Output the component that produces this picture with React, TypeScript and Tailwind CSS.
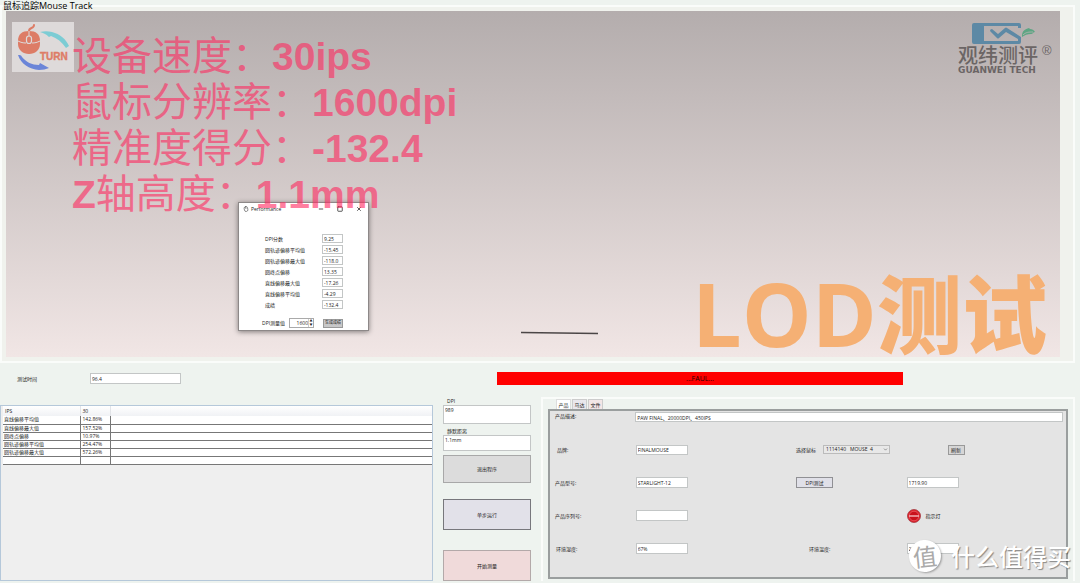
import React from 'react';
import { ChevronDown, Minus, Mouse, Square, X } from 'lucide-react';

const inputStyle =
  'block bg-white border border-[#c3c6c6] text-[5px] leading-[6px] text-[#222] px-px rounded-none outline-none';

const scores = [
  { id: 'dpi-score', label: 'DPI分数', value: '9.25' },
  { id: 'circle-avg', label: '圆轨迹偏移平均值', value: '-15.45' },
  { id: 'circle-max', label: '圆轨迹偏移最大值', value: '-118.0' },
  { id: 'circle-end', label: '圆终点偏移', value: '13.35' },
  { id: 'line-max', label: '直线偏移最大值', value: '-17.26' },
  { id: 'line-avg', label: '直线偏移平均值', value: '-4.29' },
  { id: 'result', label: '成绩', value: '-132.4' },
];

const results = [
  ['直线偏移平均值', '142.86%'],
  ['直线偏移最大值', '157.52%'],
  ['圆终点偏移', '10.97%'],
  ['圆轨迹偏移平均值', '254.47%'],
  ['圆轨迹偏移最大值', '572.26%'],
  ['', ''],
];

const TurnLogo = () => (
  <svg viewBox="0 0 62 50" className="w-[62px] h-[50px]" role="img" aria-label="Turn">
    <rect width="62" height="50" fill="#dedada" />
    <path d="M17 9c0-4 5-2 5-6" fill="none" stroke="#dd7c66" strokeWidth="2" strokeLinecap="round" />
    <path d="M6 19c0-7 4-10 11-10s11 3 11 10v3c0 6-5 10-11 10S6 28 6 22z" fill="#dd7c66" />
    <path d="M6 19c3 1.500 5 2 8 2M20 21c3 0 5-0.500 8-2M17 9v5" fill="none" stroke="#dedada" strokeWidth="1" />
    <rect x="14.500" y="14" width="5" height="7.500" rx="2.500" fill="#dd7c66" stroke="#dedada" strokeWidth="1.200" />
    <path d="M28 10c4-1 8-1 12 0 8 2 14 7 17 14l-3 2c-4-6-9-10-15-12l-2 1c-3-3-6-4-9-5z" fill="#7cccd4" />
    <path d="M6 33c2 0 3 0 4 2 4 5 10 8 17 8l1-2 9 5c-3 1-6 2-10 2C17 47 9 42 6 33z" fill="#6b85d8" />
    <text x="28" y="38" fontSize="10" className="font-['Liberation_Sans',sans-serif] font-bold" fill="#dd7c66" stroke="#dd7c66" strokeWidth="0.400">
      TURN
    </text>
  </svg>
);

const GuanweiLogo = () => (
  <svg viewBox="0 0 96 54" className="w-[96px] h-[54px]" role="img" aria-label="观纬测评">
    <path
      d="M16 1h45q2 0 2 2v3h-3V4H26v15h34v-2l-12-7-7 6q-1 1-2 0l-7-7q0-2 2-2l6 5 7-6q1-1 2 0l14 9v5q0 2-2 2H16q-2 0-2-2V3q0-2 2-2z"
      fill="#5d89a5"
    />
    <path d="M64 14c0-5 3-7 7-8l1 1c2 0 4 1 5 3-2 0-2 2-4 2-4 0-6 1-9 3z" fill="#5da583" />
    <path d="M65 13c3-3 6-3 10-3" fill="none" stroke="#bbb4b4" strokeWidth="0.800" />
    <text x="0" y="41" fontSize="20" className="font-['Noto_Sans_CJK_SC',sans-serif] font-medium" fill="#6b6565">
      观纬测评
    </text>
    <text x="0" y="51" fontSize="9" className="font-['DejaVu_Sans',sans-serif] font-bold" fill="#6b6565">
      GUANWEI TECH
    </text>
    <text x="84" y="33" fontSize="13" className="font-['Liberation_Sans',sans-serif]" fill="#6b6565">
      ®
    </text>
  </svg>
);

const Performance = () => (
  <section className="absolute left-[232px] top-[191px] w-[131px] h-[129px] bg-white border border-[#8d8888] shadow-[0_1px_5px_rgba(0,0,0,0.45)] text-[5px] leading-[6px]">
    <header className="flex items-center h-[11px] pl-1 pr-[6px]">
      <Mouse className="w-[6px] h-[6px] -rotate-12" />
      <h2 className="ml-[2px] flex-1 text-[5px]">Performance</h2>
      <div className="flex gap-[13px]">
        <button aria-label="Minimize"><Minus className="w-[6px] h-[6px]" strokeWidth={3} /></button>
        <button aria-label="Maximize"><Square className="w-[6px] h-[6px]" strokeWidth={3} /></button>
        <button aria-label="Close"><X className="w-[6px] h-[6px]" strokeWidth={3} /></button>
      </div>
    </header>
    <div className="mt-[19px] ml-[26px] mr-[25px]">
      {scores.map((s) => (
        <div key={s.id} className="flex items-center justify-between h-[11px]">
          <label htmlFor={s.id}>{s.label}</label>
          <input id={s.id} defaultValue={s.value} className={`${inputStyle} w-[21px] h-[9px]`} />
        </div>
      ))}
    </div>
    <div className="mt-2 ml-[23px] mr-[25px] flex items-center h-[10px]">
      <label htmlFor="dpi-measure" className="w-[27px]">DPI测量值</label>
      <div className="flex w-[25px] h-[10px] border border-[#aaa]">
        <input id="dpi-measure" defaultValue="1600" className="w-[18px] min-w-0 text-right outline-none" />
        <div className="flex flex-col flex-1 items-center justify-between border-l border-[#ccc] text-[3px] leading-[4px]">
          <button aria-label="Increase">▲</button>
          <button aria-label="Decrease">▼</button>
        </div>
      </div>
      <button className="ml-auto w-[20px] h-[9px] bg-[#c8c8c8] border border-[#999] text-[4px] leading-[6px] whitespace-nowrap">
        生成成绩
      </button>
    </div>
  </section>
);

const Value = ({ children }: { children: React.ReactNode }) => (
  <span className="font-['Liberation_Sans',sans-serif] font-bold text-[39px] leading-none">{children}</span>
);

const TrackCanvas = () => (
  <div className="relative flex-1 min-h-[346px] bg-linear-to-b from-[#b4adad] to-[#f1e6e5]">
    <div className="flex justify-between pt-[11px] pl-[6px] pr-[6px]">
      <TurnLogo />
      <GuanweiLogo />
    </div>
    <Performance />
    <div className="absolute left-[66px] top-[19px] text-[40px] leading-[46px] text-[#ff2a60] opacity-60 whitespace-nowrap font-['Noto_Sans_CJK_SC',sans-serif]">
      <p className="h-[46px]">设备速度：<Value>30ips</Value></p>
      <p className="h-[46px]">鼠标分辨率：<Value>1600dpi</Value></p>
      <p className="h-[46px]">精准度得分：<Value>-132.4</Value></p>
      <p className="h-[46px]"><Value>Z</Value>轴高度：<Value>1.1mm</Value></p>
    </div>
    <svg viewBox="0 0 80 4" className="absolute left-[514px] top-[320px] w-[80px] h-[4px]">
      <path d="M1 1.500 78 2.500" stroke="#4b4646" strokeWidth="1.300" />
    </svg>
    <p className="absolute right-[13px] bottom-0 text-[88px] leading-[86px] font-bold text-[#f5b074] whitespace-nowrap font-['Open_Sans','Noto_Sans_CJK_SC',sans-serif]">
      LOD<span className="font-black text-[85px] leading-none">测试</span>
    </p>
  </div>
);

const ResultTable = () => (
  <div className="min-w-0 border border-[#b5c8da] bg-[#efefef] pl-[2px]">
    <table className="w-full border-collapse table-fixed leading-[7px]">
      <thead>
        <tr className="h-[10px] bg-linear-to-b from-white to-[#f0f2f5] text-left">
          <th className="w-[77px] font-normal pl-[2px]">IPS</th>
          <th className="w-[30px] font-normal pl-[2px] border-x border-[#e2e4e8]">30</th>
          <th aria-label="empty" />
        </tr>
      </thead>
      <tbody className="bg-white">
        {results.map(([name, value], i) => (
          <tr key={i} className="h-[8px] border-b border-[#777]">
            <td className="pl-px">{name}</td>
            <td className="pl-[2px] border-x border-[#777]">{value}</td>
            <td />
          </tr>
        ))}
      </tbody>
    </table>
  </div>
);

const Controls = () => (
  <div className="mx-[10px] flex flex-col">
    <label htmlFor="dpi" className="-mt-[7px] pl-1 h-[7px] leading-[6px]">DPI</label>
    <input id="dpi" defaultValue="989" className={`${inputStyle} w-full h-[19px] pb-[9px]`} />
    <label htmlFor="lift" className="mt-[3px] pl-1 h-[8px] leading-[8px]">静默距离</label>
    <input id="lift" defaultValue="1.1mm" className={`${inputStyle} w-full h-[16px] pb-[7px]`} />
    <button className="mt-1 h-[28px] bg-[#dcdcdc] border border-[#a8a8a8]">退出程序</button>
    <button className="mt-4 h-[31px] bg-[#e2e1e9] border border-[#77777c]">单步运行</button>
    <button className="mt-5 h-[31px] bg-[#f0dada] border border-[#b3a9a9]">开始测量</button>
  </div>
);

const rowStyle = 'grid grid-cols-[86fr_161fr_111fr_160fr] items-center h-[33px]';

const ProductPanel = () => (
  <section className="min-w-0 -mt-[8px] border-2 border-[#fafcfa] border-b-0 px-[5px] pb-px">
    <div role="tablist" className="flex gap-px pl-2 h-[10px] leading-[8px]">
      <button role="tab" aria-selected="true" className="w-[15px] bg-white border border-b-0 border-[#ddd]">产品</button>
      <button role="tab" aria-selected="false" className="w-[15px] bg-[#e9e7ec] border border-b-0 border-[#ccc]">马达</button>
      <button role="tab" aria-selected="false" className="w-[15px] bg-[#f2e6e6] border border-b-0 border-[#ccc]">文件</button>
    </div>
    <div className="bg-[#e4e4e4] border-2 border-[#9a9e9e] pb-[12px]">
      <div className="flex items-start h-[22px] pt-px pr-[3px]">
        <label htmlFor="desc" className="w-[16.600%] pl-[5px] leading-[8px]">产品描述:</label>
        <input id="desc" defaultValue="PAW FINAL、20000DPI、450IPS" className={`${inputStyle} flex-1 h-[10px]`} />
      </div>
      <div className={rowStyle}>
        <label htmlFor="brand" className="pl-[7px]">品牌:</label>
        <input id="brand" defaultValue="FINALMOUSE" className={`${inputStyle} w-[52px] h-[10px]`} />
        <div className="flex items-center">
          <label htmlFor="mouse" className="w-[27px]">选择鼠标</label>
          <div className="relative">
            <select id="mouse" className="block appearance-none w-[67px] h-[9px] pl-[2px] bg-[#e8e8e8] border border-[#bbb] text-[5px] leading-[7px]">
              <option>{'1114140\u00a0\u00a0\u00a0MOUSE\u00a0\u00a04'}</option>
            </select>
            <ChevronDown className="absolute right-[2px] top-[2px] w-[5px] h-[5px] pointer-events-none" />
          </div>
        </div>
        <button className="ml-[41px] w-[17px] h-[10px] bg-[#d6d6d6] border border-[#999]">刷新</button>
      </div>
      <div className={rowStyle}>
        <label htmlFor="model" className="pl-[5px]">产品型号:</label>
        <input id="model" defaultValue="STARLIGHT-12" className={`${inputStyle} w-[52px] h-[11px]`} />
        <button className="w-[37px] h-[11px] bg-[#e0e0e8] border border-[#909094]">DPI测试</button>
        <input aria-label="DPI测试" defaultValue="1719.90" className={`${inputStyle} w-[52px] h-[11px]`} />
      </div>
      <div className={rowStyle}>
        <label htmlFor="serial" className="pl-[5px]">产品序列号:</label>
        <input id="serial" className={`${inputStyle} w-[52px] h-[11px]`} />
        <span />
        <div className="flex items-center gap-[5px]">
          <svg viewBox="0 0 14 14" className="w-[14px] h-[14px]">
            <circle cx="7" cy="7" r="6.500" fill="#df1c27" stroke="#a03a40" strokeWidth="0.800" />
            <circle cx="7" cy="7" r="4.800" fill="#c9101c" stroke="#f0757c" strokeWidth="0.600" />
            <rect x="2" y="6.400" width="10" height="1.200" fill="#f8d5d7" />
          </svg>
          <span>指示灯</span>
        </div>
      </div>
      <div className={rowStyle}>
        <label htmlFor="humidity" className="pl-[6px]">环境湿度:</label>
        <input id="humidity" defaultValue="67%" className={`${inputStyle} w-[52px] h-[11px]`} />
        <label htmlFor="temperature" className="pl-[13px]">环境温度:</label>
        <input id="temperature" defaultValue="25.0" className={`${inputStyle} w-[52px] h-[11px]`} />
      </div>
    </div>
  </section>
);

const Watermark = () => (
  <div className="absolute right-[9px] bottom-[11px] flex items-center gap-[10px] text-white pointer-events-none font-['Noto_Sans_CJK_SC',sans-serif]">
    <span className="flex items-center justify-center w-8 h-8 rounded-full bg-white text-[#aaa] text-[24px] leading-[32px] -rotate-6 shadow-[1px_1px_2px_rgba(0,0,0,0.3)]">
      值
    </span>
    <span className="text-[24px] leading-[32px] font-medium text-shadow-[1px_1px_1px_rgba(0,0,0,0.4)]">什么值得买</span>
  </div>
);

export default function App() {
  return (
    <main className="relative min-h-screen flex flex-col bg-[#eef3ef] text-[#222] text-[5px] leading-[6px] font-['Open_Sans','Noto_Sans_CJK_SC',sans-serif]">
      <fieldset className="flex-1 flex flex-col mr-[5px] border-2 border-[#fafcfa] bg-[#f0f2ed] pl-1 pr-[13px] pb-[3px]">
        <legend className="-ml-[3px] text-[9px] leading-[11px] text-black">鼠标追踪Mouse Track</legend>
        <TrackCanvas />
      </fieldset>
      <div className="flex items-center h-[31px]">
        <label htmlFor="time" className="pl-[17px] w-[90px]">测试时间</label>
        <input id="time" defaultValue="96.4" className={`${inputStyle} w-[91px] h-[11px]`} />
        <div role="status" className="ml-[316px] mr-[177px] flex-1 h-[13px] leading-[13px] bg-[#ff0000] text-center text-[7px] text-[#200]">
          ...FAUL...
        </div>
      </div>
      <div className="mt-[11px] grid grid-cols-[433fr_108px_534fr] pr-[5px] pb-[2px]">
        <ResultTable />
        <Controls />
        <ProductPanel />
      </div>
      <Watermark />
    </main>
  );
}
